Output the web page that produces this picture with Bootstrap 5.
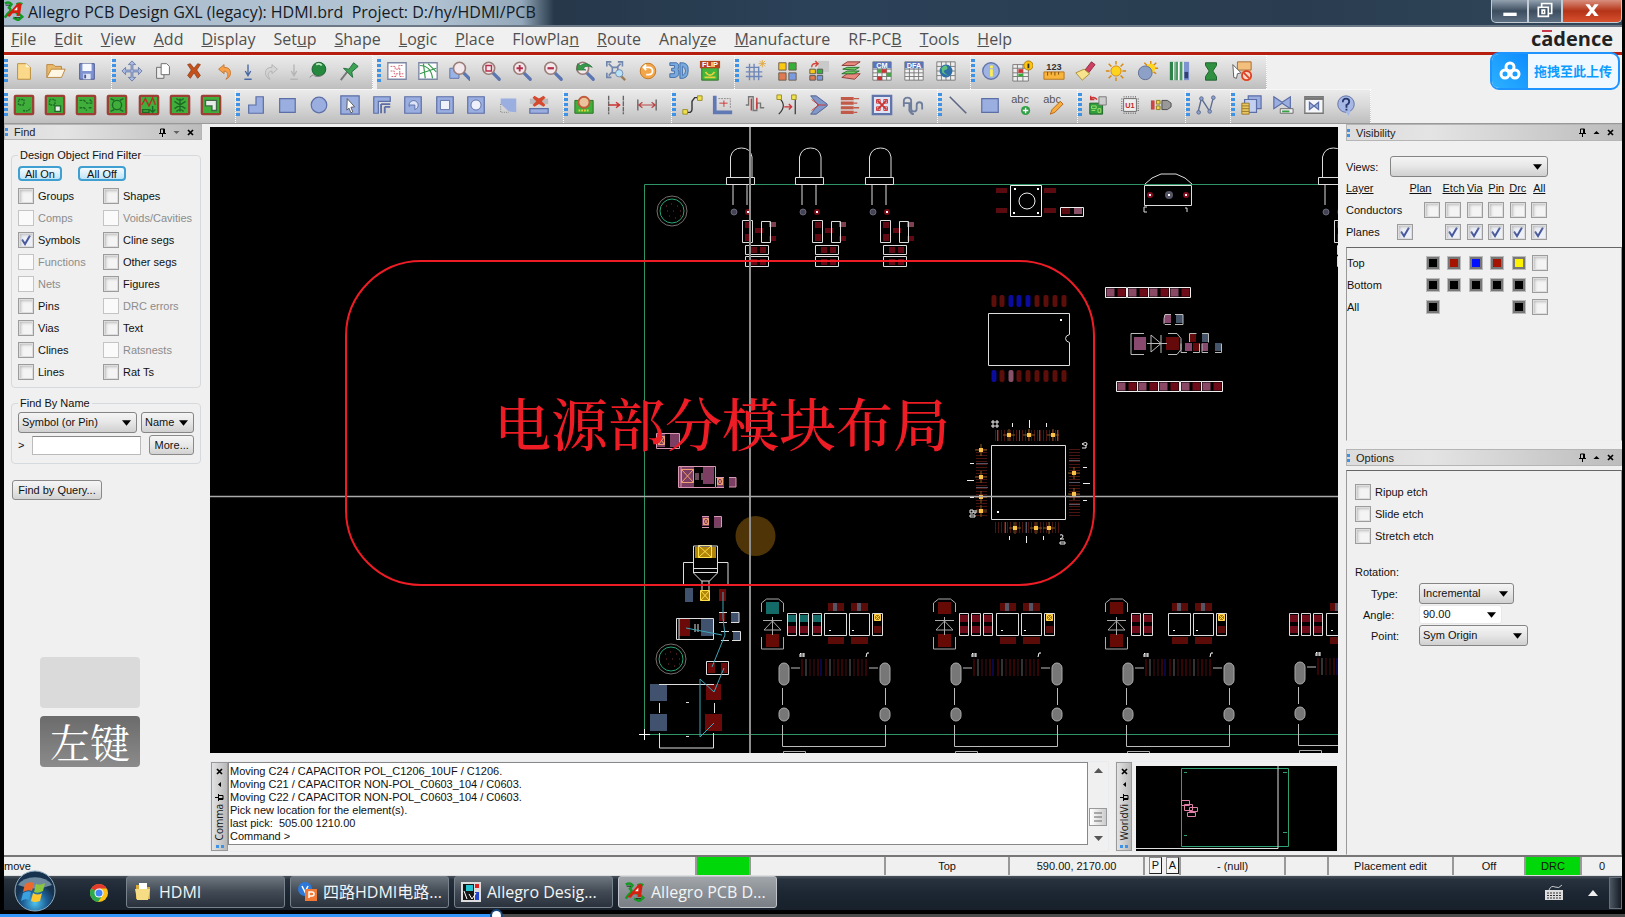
<!DOCTYPE html>
<html lang="en">
<head>
<meta charset="utf-8">
<meta name="viewport" content="width=device-width, initial-scale=1">
<title>Allegro PCB Design GXL</title>
<link href="https://cdn.jsdelivr.net/npm/bootstrap@5.3.0/dist/css/bootstrap.min.css" rel="stylesheet">
<style>
:root{--ui:"Liberation Sans",Arial,sans-serif;--seg:"Open Sans","Noto Sans CJK SC",sans-serif}
body{background:#000;color:#111;font:11px/14px var(--ui);overflow:hidden}
.app-win{padding:0 3px 0 4px;min-height:0}
.app-win>*{background-color:#f0f0f0}
button{font:inherit;color:inherit}
/* title bar */
.title-strip{height:27px;background:linear-gradient(90deg,#a9bccd 0,#b3c4d3 26%,#93a8ba 32%,#26384a 34%,#2b4157 50%,#2a3d50 80%,#31475a 100%);border-bottom:2px solid #6c7886;font:16px/24px var(--seg);color:#141b26}
.title-strip svg{width:20px;height:22px}
.title-text{white-space:pre;padding-left:4px}
.wbtn{height:23px;border:1px solid #c3ccd5;border-top:0;background:linear-gradient(#93a1af,#3c4d5f 50%,#5d6f82);color:#fff;padding:0;display:flex;align-items:center;justify-content:center}
.wbtn-min{width:37px;border-radius:0 0 0 5px}.wbtn-max{width:34px}.wbtn-close{width:60px;background:linear-gradient(#d98f7e,#b53317 50%,#d8512f);border-radius:0 0 5px 0}
/* menu */
.menu-strip{height:28px;border-bottom:3px solid #b61f10;font:16px/24px var(--seg);padding:0 7px 0 7px}
.menu-strip .nav{gap:18px}
.menu-strip .nav-link{padding:0;color:#505050}
.brand-word{font:bold 20px/24px "Open Sans",sans-serif;color:#222;padding-right:2px}
.brand-word span{position:relative}
.brand-word span::before{content:"";position:absolute;left:1px;right:1px;top:5px;height:2px;background:#c8374a}
/* toolbars */
.tool-row{height:34px}
.tool-group{height:34px;background:linear-gradient(#ececec,#d8d8d8 50%,#bebebe);border-right:1px dotted #fff;box-shadow:inset 0 1px #f6f6f6;padding:0 8px 3px 0}
.grip{width:4px;height:24px;background:repeating-linear-gradient(#3f93e6 0 3px,transparent 3px 5px);flex:none}
.tool-btn{flex:1 1 0;min-width:0;border:0;background:none;padding:0;display:flex;justify-content:center}
.tool-btn svg{width:22px;height:22px;flex:none}
.tool-btn.slim{flex-grow:.5}
.n1{width:45px}.n3{width:108px}.n4{width:140px}.n7{width:232px}.n7w{width:236px}.n8{width:266px}.n9{width:261px}.n9w{width:296px}.n10{width:328px}.n11{width:358px}
.n9{margin-right:4px}
/* docks */
.side-left{width:198px}.side-right{width:276px}
.work-row{gap:8px;border-top:1px solid #999}
.work-row>section{min-width:0;padding-top:3px}
.dock-head{height:16px;background:linear-gradient(90deg,#dcdcdc,#e4e4e4 30%,#bcbcbc);border:1px solid #b5b5b5;line-height:14px;color:#222;padding:0 4px 0 0}
.side-right .dock-head{height:17px;flex:none}
.dots{width:3px;height:8px;background:repeating-linear-gradient(#3f93e6 0 3px,transparent 3px 5px);margin-right:6px}
.dock-ico{border:0;background:none;padding:0;width:14px;height:12px;display:flex;justify-content:center;align-items:center}
.dock-ico svg{width:9px;height:9px}
.group-box{border:1px solid #d5dade;border-radius:4px;margin:8px 1px 0 7px;padding:0 6px 4px;position:relative;min-width:0}
.group-box legend{float:none;width:auto;font-size:11px;line-height:14px;padding:0 2px;margin:0}
.find-grid{display:grid;grid-template-columns:85px 1fr;grid-auto-rows:22px;align-items:center;margin-top:4px}
.name-row{padding-top:2px}
.ck{display:flex;align-items:center;gap:4px;white-space:nowrap}
.ck.off{color:#8c8c8c}
.form-check-input.cb{width:16px;height:16px;margin:0;flex:none;border:1px solid #9c9c9c;border-radius:0;background-color:#f4f4f4;box-shadow:inset 0 0 0 1px #ddd,inset 2px 2px 3px #bbb;opacity:1}
.form-check-input.cb:disabled{opacity:1;border:1px solid #c4c4c4;box-shadow:none;background-color:#fafafa}
.form-check-input.cb:checked{background-color:#eef0f8;border-color:#9c9c9c;background-size:14px 14px;background-image:url("data:image/svg+xml,%3Csvg xmlns='http://www.w3.org/2000/svg' viewBox='0 0 14 14'%3E%3Cpath d='M3 6.5 6 11 11 2.500' fill='none' stroke='%23485a9c' stroke-width='2'/%3E%3C/svg%3E")}
.pill-btn{height:15px;border:2px solid #3f9fd0;border-radius:4px;background:linear-gradient(#f4fbff,#bfe4f8);padding:0;line-height:12px;font-size:11px}
.pill-a{width:44px}.pill-b{width:48px}
.form-select.sel{height:21px;border:1px solid #858585;border-radius:3px;font:11px/17px var(--ui);color:#111;padding:0 18px 0 3px;background:url("data:image/svg+xml,%3Csvg xmlns='http://www.w3.org/2000/svg' viewBox='0 0 10 6'%3E%3Cpath d='M0 0h10L5 6z'/%3E%3C/svg%3E") no-repeat right 5px center/9px 6px,linear-gradient(#f5f5f5,#e6e6e6 50%,#d0d0d0)}
.form-select.plain{height:19px;border-color:#e8e8e8;background:url("data:image/svg+xml,%3Csvg xmlns='http://www.w3.org/2000/svg' viewBox='0 0 10 6'%3E%3Cpath d='M0 0h10L5 6z'/%3E%3C/svg%3E") no-repeat right 5px center/9px 6px,#fff}
.gray-btn{height:20px;border:1px solid #8a8a8a;border-radius:3px;background:linear-gradient(#f5f5f5,#e8e8e8 50%,#d2d2d2);padding:0;line-height:16px}
.find-in{height:19px;border:1px solid #bbb;border-top-color:#888;border-radius:0;padding:0 2px;font:11px/16px var(--ui)}
/* pressed key display */
.key-show{position:absolute;left:40px;bottom:143px;width:100px;z-index:3}
.key-show div{height:51px;border-radius:4px;background:#dadada;margin-top:8px}
.key-show .lit{background:linear-gradient(#6b6b6b,#8b8b8b);color:#fff;font:40px/50px "Noto Serif CJK SC","Noto Sans CJK SC",serif;text-align:center}
/* visibility and options */
.panel-rule{border:1px solid #999;border-top-color:#666;border-bottom-color:#eee}
.vis-grid{width:204px;table-layout:fixed;margin:0;border-collapse:collapse}
.vis-grid .c-label{width:43px}.vis-grid .c-plan{width:32px}
.vis-grid th,.vis-grid td{padding:0;height:22px;font-weight:400;text-align:center;vertical-align:middle;white-space:nowrap}
.vis-grid th:first-child{text-align:left}
.vis-grid th.plan-head{text-align:right;padding-right:11px}
.vis-grid .form-check-input.cb{display:block;margin:0 auto}
.swatch{display:block;width:12px;height:12px;margin:0 auto;padding:0;border:2px solid #777;outline:1px solid #bbb;background:#000}
.sw-red{background:#a51400}.sw-blue{background:#0010ff}.sw-yel{background:#fff200}
.vis-top{height:106px;padding-top:15px}
.vis-layers{height:194px}
.opt-body{padding:13px 8px 0}
.opt-checks{gap:6px;margin-bottom:21px}
.opt-rows{display:grid;grid-template-columns:56px 1fr;row-gap:1px;align-items:center}
.w95{width:95px}.w90{width:90px}.w83{width:83px}.w109{width:109px}.w158{width:158px}.w124{width:124px}.w53{width:53px}.w48{width:48px}
/* canvas and lower docks */
.pcb{display:block;width:100%;flex:1 1 0;min-height:0;background:#000}
.low-docks{height:91px;margin:8px 0 3px;gap:6px}
.v-head{width:17px;background:linear-gradient(90deg,#e2e2e2,#b9b9b9);border:1px solid #999;gap:1px;padding-top:2px}
.v-head b{writing-mode:vertical-rl;transform:rotate(180deg);font:10px/13px "Open Sans",sans-serif;color:#111}
.v-head i{width:8px;height:3px;background:repeating-linear-gradient(90deg,#3f93e6 0 3px,transparent 3px 5px);margin-top:auto;margin-bottom:2px}
.cmd-text{background:#fff;border:1px solid #888;margin-bottom:6px;line-height:13px;padding:2px 1px;resize:none;font-size:11px;font-family:var(--ui);color:#111;border-radius:0;overflow:hidden;white-space:pre}
.scroll-col{width:20px;padding:4px 0 8px}
.thumb{width:18px;height:18px;border:1px solid #999;background:linear-gradient(90deg,#fff,#ccc)}
.world-dock{width:223px}
/* status */
.status-strip{height:21px;border-top:2px solid #777;line-height:18px;border-bottom:1px solid #ddd}
.status-strip>div{border-right:2px solid #999;text-align:center;white-space:nowrap;height:18px;flex:none}
.s54{width:54px}.s135{width:135px}.s124{width:124px}.s105{width:105px}.s43{width:43px}.s125{width:125px}.s72{width:72px}.s56{width:56px}.s42{width:40px}.s36{width:36px}
.green{background:#00d80a}
.pa{border:1px solid #888;border-right-color:#222;border-bottom-color:#222;background:#f6f6f6;width:15px;height:17px;line-height:15px;padding:0}
/* task bar */
.app-win>.task-strip{height:34px;background:linear-gradient(#4a545e 0,#27323e 10%,#1c2733 50%,#17202b);font:16px/30px var(--seg);color:#fff}
.orb{width:46px;height:42px;position:relative;z-index:2;border:0;background:none;padding:0;margin:-6px 0 0 8px}
.orb svg{width:46px;height:42px}
.chrome-btn{padding:0;margin:0 17px 0 31px}
.task-btn{width:159px;height:32px;border:1px solid #78828c;border-radius:3px;background:linear-gradient(#6d757e,#414a54 50%,#2a333d);color:#f4f4f4;padding:0 6px;display:flex;align-items:center;gap:6px;white-space:nowrap;margin-right:5px}
.task-btn svg{width:20px;height:20px;flex:none}
.task-btn.active-win{background:linear-gradient(#a2a6ab,#8b9096 50%,#7a7f85);border-color:#c0c4c8}
.show-desk{width:13px;height:32px;border:1px solid #65707b;background:linear-gradient(90deg,#4c5763,#141b23)}
.tray-up{margin-right:11px}
/* player bar */
.seek-row{height:7px;padding-top:4px}
.seek-row>div{height:3px;background:#4a4a4a;position:relative}
.seek-fill{height:3px;background:#3396fb;width:497px}
.seek-fill::after{content:"";position:absolute;left:492px;top:-3px;width:9px;height:9px;border-radius:5px;background:#fff;box-shadow:0 0 0 2px #17467d}
.upload-tag{position:absolute;right:5px;top:52px;width:130px;height:38px;border:2px solid #1d94ff;border-radius:9px;background:#eff7ff;color:#0a9dff;font:bold 13px/34px "Noto Sans CJK SC",sans-serif;padding:0;z-index:4;overflow:hidden;display:flex;align-items:center}
.upload-tag svg{width:36px;height:36px;flex:none;background:linear-gradient(45deg,#2eb1ff,#0b8cff);margin-right:6px}
</style>
</head>
<body class="d-flex flex-column vh-100">
<div class="app-win d-flex flex-column flex-grow-1 position-relative">
  <header class="title-strip d-flex align-items-start">
    <svg viewBox="0 0 24 24" aria-hidden="true"><use href="#i-allegro"/></svg>
    <div class="title-text flex-grow-1">Allegro PCB Design GXL (legacy): HDMI.brd  Project: D:/hy/HDMI/PCB</div>
    <button class="wbtn wbtn-min" aria-label="Minimize"><svg viewBox="0 0 24 24"><path d="M4 14h16v4H4z" fill="#fff"/></svg></button>
    <button class="wbtn wbtn-max" aria-label="Restore"><svg viewBox="0 0 24 24"><path d="M8 8V3h12v12h-4M4 7.500h12v11H4zM8.500 11h3v4h-3z" fill="none" stroke="#fff" stroke-width="2"/></svg></button>
    <button class="wbtn wbtn-close" aria-label="Close"><svg viewBox="0 0 24 24"><path d="M4 4h5l3 4 3-4h5l-5.500 7 5.500 7h-5l-3-4-3 4H4l5.500-7z" fill="#fff"/></svg></button>
  </header>
  <nav class="menu-strip d-flex justify-content-between" aria-label="Main menu">
    <div class="nav flex-nowrap">
      <a class="nav-link" href="#"><u>F</u>ile</a><a class="nav-link" href="#"><u>E</u>dit</a><a class="nav-link" href="#"><u>V</u>iew</a><a class="nav-link" href="#"><u>A</u>dd</a><a class="nav-link" href="#"><u>D</u>isplay</a><a class="nav-link" href="#">Set<u>u</u>p</a><a class="nav-link" href="#"><u>S</u>hape</a><a class="nav-link" href="#"><u>L</u>ogic</a><a class="nav-link" href="#"><u>P</u>lace</a><a class="nav-link" href="#">FlowPla<u>n</u></a><a class="nav-link" href="#"><u>R</u>oute</a><a class="nav-link" href="#">Analy<u>z</u>e</a><a class="nav-link" href="#"><u>M</u>anufacture</a><a class="nav-link" href="#">RF-PC<u>B</u></a><a class="nav-link" href="#"><u>T</u>ools</a><a class="nav-link" href="#"><u>H</u>elp</a>
    </div>
    <div class="brand-word">c<span>a</span>dence</div>
  </nav>
  <div class="tool-row d-flex" id="row1"></div>
  <div class="tool-row d-flex" id="row2"></div>

  <main class="work-row d-flex flex-grow-1">
    <aside class="side-left">
      <div class="dock-head d-flex align-items-center"><span class="dots"></span><span class="flex-grow-1">Find</span>
        <button class="dock-ico" aria-label="Pin"><svg><use href="#i-pin"/></svg></button><button class="dock-ico" aria-label="Menu"><svg opacity=".5"><use href="#i-down"/></svg></button><button class="dock-ico" aria-label="Close"><svg><use href="#i-x"/></svg></button></div>
      <fieldset class="group-box">
        <legend>Design Object Find Filter</legend>
        <div class="d-flex gap-3 pt-1"><button class="pill-btn pill-a">All On</button><button class="pill-btn pill-b">All Off</button></div>
        <div class="find-grid">
          <label class="ck"><input type="checkbox" class="form-check-input cb">Groups</label><label class="ck"><input type="checkbox" class="form-check-input cb">Shapes</label>
          <label class="ck off"><input type="checkbox" class="form-check-input cb" disabled>Comps</label><label class="ck off"><input type="checkbox" class="form-check-input cb" disabled>Voids/Cavities</label>
          <label class="ck"><input type="checkbox" class="form-check-input cb" checked>Symbols</label><label class="ck"><input type="checkbox" class="form-check-input cb">Cline segs</label>
          <label class="ck off"><input type="checkbox" class="form-check-input cb" disabled>Functions</label><label class="ck"><input type="checkbox" class="form-check-input cb">Other segs</label>
          <label class="ck off"><input type="checkbox" class="form-check-input cb" disabled>Nets</label><label class="ck"><input type="checkbox" class="form-check-input cb">Figures</label>
          <label class="ck"><input type="checkbox" class="form-check-input cb">Pins</label><label class="ck off"><input type="checkbox" class="form-check-input cb" disabled>DRC errors</label>
          <label class="ck"><input type="checkbox" class="form-check-input cb">Vias</label><label class="ck"><input type="checkbox" class="form-check-input cb">Text</label>
          <label class="ck"><input type="checkbox" class="form-check-input cb">Clines</label><label class="ck off"><input type="checkbox" class="form-check-input cb" disabled>Ratsnests</label>
          <label class="ck"><input type="checkbox" class="form-check-input cb">Lines</label><label class="ck"><input type="checkbox" class="form-check-input cb">Rat Ts</label>
        </div>
      </fieldset>
      <fieldset class="group-box pb-2">
        <legend>Find By Name</legend>
        <div class="name-row d-flex gap-1"><select class="form-select sel w124" aria-label="Object type"><option>Symbol (or Pin)</option></select><select class="form-select sel w53" aria-label="Match by"><option>Name</option></select></div>
        <div class="name-row d-flex align-items-center"><label for="fname" class="me-2">&gt;</label><input id="fname" class="form-control find-in w109 me-1"><button class="gray-btn w48 ms-1">More...</button></div>
      </fieldset>
      <button class="gray-btn w90 ms-2 mt-3">Find by Query...</button>
    </aside>

    <section class="d-flex flex-column flex-grow-1">
      <svg class="pcb" viewBox="211 127 1128 626" preserveAspectRatio="xMidYMid slice" fill="none" role="img" aria-label="Board layout">
        <defs>
          <g id="led"><path d="M731.500 177v-20q2-9 11-9t10.500 9v20M727.500 177.500h28v7h-28zM734 185v20M748 185v20" stroke="#ddd"/><circle cx="735" cy="212" r="3" fill="#445" stroke="#667"/><circle cx="749" cy="212" r="3" fill="#7a0b18"/><path d="M748 211h2v2h-2z" fill="#fff"/></g>
          <g id="ledparts"><path d="M746 222h6v6h-6zM746 234h6v7h-6zM756 228h8v5h-8zM770 236h7v5h-7zM752 247h6v6h-6zM761 247h6v6h-6zM752 259h6v6h-6zM761 259h6v6h-6z" fill="#620812"/><path d="M770 222h7v5h-7z" fill="#804050"/><path d="M743.500 220.500h10v22h-10zM762.500 221.500h9v21h-9zM746.500 245.500h23v9h-23zM746.500 256.500h23v10h-23z" stroke="#ddd"/></g>
          <g id="diode"><path d="M767 602h13v12h-13zM767 634h13v13h-13z" fill="#660a06"/><path d="M762.500 612v-9l5-4h12l5 4v9M762.500 637v12h22v-12M773.500 617v18M764 620.500h19M765 630h17l-8.500-9z" stroke="#aaa"/></g>
          <g id="rc"><path d="M789 615h8v7h-8zM789 626h8v7h-8z" fill="#6d0b18"/><path d="M788.500 613.500h9v22h-9z" stroke="#ddd"/></g>
          <g id="ics"><path d="M829 603h16v8h-16zM852 603h17v8h-17zM829 637h16v7h-16zM852 637h17v7h-17zM875 626h7v7h-7z" fill="#5b0c08"/><path d="M834 603h4v8h-4zM858 603h4v8h-4z" fill="#556"/><path d="M825.500 613.500h22v22h-22zM850.500 613.500h20v22h-20zM873.500 613.500h10v22h-10z" stroke="#ddd"/><path d="M830 630h2v1h-2zM853 630h2v1h-2z" fill="#fff"/><path d="M875.500 614.500h6v6h-6zl6 6m0-6-6 6" stroke="#ffd24a" fill="#a57a10"/></g>
          <g id="conn"><g stroke="#aaa" fill="#777"><rect x="780" y="663" width="10" height="22" rx="5"/><rect x="881" y="663" width="10" height="22" rx="5"/><rect x="780" y="708" width="10" height="13" rx="5"/><rect x="881" y="708" width="10" height="13" rx="5"/></g><path d="M783.500 688v17M886.500 688v17M783.500 725v21.500h103V725M792 668h9M870 668h9" stroke="#bbb"/><path d="M803 659v17M819 659v17M827 659v17M839 659v17M843 659v17M859 659v17M867 659v17" stroke="#6b0b0b"/><path d="M807 659v17M831 659v17M851 659v17" stroke="#666"/><path d="M811 659v17M815 659v17M835 659v17M847 659v17M855 659v17M863 659v17" stroke="#441014"/><path d="M822 659v17" stroke="#118"/><path d="M801 657v-3l1-1v4M804 653v4M805 653v4M867 657l1-4h2" stroke="#fff"/><path d="M784.500 751.500h22v4h-22z" stroke="#aaa"/></g>
          <g id="hole"><circle r="15" stroke="#776f6f"/><circle r="12" stroke="#2aa374"/><path d="M-6-5h1m4-2h1m5 2h1m-11 5h1m5 0h1m6 0h1m-12 5h1m5 2h1m4-2h1" stroke="#803030"/></g>
          <g id="pinr"><rect x="-2.500" width="5" height="12" rx="2" fill="#5c0e0a"/></g>
          <g id="pinb"><rect x="-2.500" width="5" height="12" rx="2" fill="#0b0b9c"/></g>
          <g id="mk"><path d="M-6 0H6M0-6V6" stroke="#8a5a20"/><path d="M-2-2h4v4h-4z" fill="#fbc24a"/></g>
          <g id="twopad"><path d="M1 1h8v8H1z" fill="#8a4a66"/><path d="M12 1h8v8h-8z" fill="#6d0b18"/><path d="M0 0h21v10H0z" stroke="#eee"/></g>
        </defs>
        <path d="M1340 184.500H645.500V734.500H1340" stroke="#2f9466"/>
        <use href="#hole" x="673" y="211"/><use href="#hole" x="672" y="659"/>
        <use href="#led"/><use href="#led" x="69"/><use href="#led" x="139"/><use href="#led" x="592"/>
        <use href="#ledparts"/><use href="#ledparts" x="70"/><use href="#ledparts" x="138"/><use href="#ledparts" x="592"/>
        <path d="M997 188h11v5h-11zM997 208h11v5h-11zM1045 188h12v5h-12zM1045 208h12v5h-12zM1063 208h8v6h-8z" fill="#5b0b10"/><path d="M1075 208h8v6h-8z" fill="#8a5068"/>
        <path d="M1011.500 185.500h31v31h-31zM1061.500 207.500h23v9h-23z" stroke="#eee"/><circle cx="1028" cy="201" r="8" stroke="#eee"/><path d="M1015 188h2v2h-2zM1038 188h2v2h-2zM1014 212h2v2h-2zM1038 212h2v2h-2z" fill="#fff"/>
        <path d="M1145.500 185.500h47v20h-47zM1146 184l7-6 9-4h15l9 4 7 6M1148 207h-3v5h3M1186 208h2v4" stroke="#ddd"/><circle cx="1151" cy="195" r="3" fill="#8b0b20"/><circle cx="1170" cy="195" r="4" fill="#556"/><circle cx="1187" cy="195" r="3" fill="#8b0b20"/><path d="M1150 194h2v2h-2zM1169 194h2v2h-2zM1186 194h2v2h-2z" fill="#fff"/>
        <path d="M989.500 313.500h81v21q-4 1-4 4t4 4v23h-81z" stroke="#ddd"/><path d="M1061 319h2v2h-2z" fill="#fff"/>
        <use href="#pinr" x="995" y="295"/><use href="#pinr" x="1003" y="295"/><use href="#pinb" x="1012" y="295"/><use href="#pinb" x="1020" y="295"/><use href="#pinb" x="1029" y="295"/><use href="#pinr" x="1038" y="295"/><use href="#pinr" x="1047" y="295"/><use href="#pinr" x="1056" y="295"/><use href="#pinr" x="1065" y="295"/>
        <use href="#pinb" x="995" y="370"/><use href="#pinr" x="1003" y="370"/><rect x="1009.500" y="370" width="5" height="12" rx="2" fill="#8a5068"/><use href="#pinr" x="1020" y="370"/><use href="#pinr" x="1029" y="370"/><use href="#pinr" x="1038" y="370"/><use href="#pinr" x="1047" y="370"/><use href="#pinr" x="1056" y="370"/><use href="#pinr" x="1065" y="370"/>
        <use href="#twopad" x="1106.500" y="287.500"/><use href="#twopad" x="1128.500" y="287.500"/><use href="#twopad" x="1149.500" y="287.500"/><use href="#twopad" x="1170.500" y="287.500"/>
        <use href="#twopad" x="1117.500" y="381.500"/><use href="#twopad" x="1138.500" y="381.500"/><use href="#twopad" x="1159.500" y="381.500"/><use href="#twopad" x="1181.500" y="381.500"/><use href="#twopad" x="1202.500" y="381.500"/>
        <path d="M1165 315h7v8h-7zM1186 343h7v8h-7zM1203 343h6v8h-6zM1135 337h12v13h-12z" fill="#8a4a70"/><path d="M1177 315h7v8h-7zM1203 334h7v8h-7zM1216 343h6v8h-6z" fill="#455468"/><path d="M1167 337h13v13h-13zM1191 334h6v8h-6zM1194 343h6v8h-6z" fill="#650a0a"/>
        <path d="M1172 314.500h-6l-1 4v5l1 1h6M1176 314.500h8v10h-8M1190.500 342v-8.500h7M1203 333.500h6.500v9M1188 352.500h-6v-9M1194 352.500h6.500v-9M1209 352.500h-6v-9M1216 352.500h6.500v-9M1145 333.500h-13v21h13M1169 333.500h9l4 5v11l-4 5h-9M1148 343.500h20M1152 335v17l10-8.500zM1162 335v18" stroke="#bbb"/>
        <path d="M992.500 445.500h74v74h-74z" stroke="#ddd"/><path d="M998 511h2v2h-2z" fill="#fff"/>
        <g stroke-dasharray="1 2" stroke="#4a1511" stroke-width="11"><path d="M996 435.500h66M996 527.500h66M982.500 449v67M1075.500 449v67"/></g>
        <path d="M998.500 430v11M1020.500 430v11M1040.500 430v11M1058.500 430v11M1006.500 522v11M1027.500 522v11M977 463.500h12M977 487.500h12M1070 460.500h11M1070 482.500h11M1070 504.500h11" stroke="#556"/>
        <use href="#mk" x="1010" y="435"/><use href="#mk" x="1030" y="435"/><use href="#mk" x="1054" y="435"/><use href="#mk" x="1016" y="528"/><use href="#mk" x="1037" y="528"/><use href="#mk" x="1050" y="528"/><use href="#mk" x="982" y="450"/><use href="#mk" x="982" y="477"/><use href="#mk" x="982" y="497"/><use href="#mk" x="982" y="511"/><use href="#mk" x="1075" y="473"/><use href="#mk" x="1075" y="494"/>
        <path d="M1013.500 423v4M1030.500 420v8M1047.500 423v4M1010.500 536v4M1027.500 536v7M1044.500 536v4M971 463.500h4M968 480.500h7M971 497.500h4M1084 467.500h4M1084 483.500h7M1084 500.500h4M993 421h2v2h-2zM997 421h2v2h-2zM993 425h2v2h-2zM997 425h2v2h-2zM1083 448h4v-3M1083 444q5-3 5 0t-5 0M971 510h3v3h-3zM975 510v3h2v-3M971 515h5v2h-5zM1061 535q3-1 3 1t-3 3h4M1061 542h5v2h-5z" stroke="#eee"/>
        <use href="#diode"/><path d="M767 602h13v12h-13z" fill="#146a66"/><use href="#rc"/><use href="#rc" x="12"/><use href="#rc" x="25"/><path d="M789 615h8v7h-8zM801 615h8v7h-8zM814 615h8v7h-8z" fill="#146a66"/><use href="#ics"/><use href="#conn"/>
        <use href="#diode" x="172"/><use href="#rc" x="172"/><use href="#rc" x="184"/><use href="#rc" x="196"/><use href="#ics" x="172"/><use href="#conn" x="172"/>
        <use href="#diode" x="344"/><use href="#rc" x="344"/><use href="#rc" x="356"/><use href="#ics" x="344"/><use href="#conn" x="344"/>
        <use href="#rc" x="502"/><use href="#rc" x="514"/><use href="#rc" x="526"/><use href="#ics" x="502"/><use href="#conn" x="516" y="-1"/>
        <!-- power parts beside the board edge -->
        <path d="M658 434h8v13h-8zM671 434h9v13h-9zM680 467h15v20h-15zM704 467h11v17h-11zM718 478h7v9h-7zM730 478h7v9h-7zM703 517h7v9h-7zM715 517h7v9h-7z" fill="#7c3e62"/>
        <path d="M657.500 433.500h23v15h-23zM679.500 466.500h37v21h-37zM682 467v20M717 477.500h8m-8 10h8M730 477.500h7v9.500h-7M703 516.500h7m-7 11h7M715 516.500h7.500v10.500H715M697 473v7m2-7v7m4-7v7" stroke="#d898b4"/>
        <path d="M682.500 469.500h12v13h-12zl12 13m0-13-12 13M659.500 436.500h6v8h-6zl6 8m0-8-6 8M718.500 478.500h5v6h-5zl5 6m0-6-5 6M704.500 518.500h5v6h-5zl5 6m0-6-5 6" stroke="#f0a070"/>
        <path d="M696 547h21v11h-21zM702 591h9v9h-9z" fill="#b08408"/><path d="M699.500 545.500h13v12h-13zl13 12m0-12-13 12M701.500 590.500h9v10h-9zl9 10m0-10-9 10" stroke="#ffdf4a"/>
        <path d="M694.500 573v-27h24v27l-8 8h-8zM695 568.500h24M695 572.500h24M684.500 586v-23.500h10M719 562.500h10V586M703 581v9M710 581v9" stroke="#ddd"/>
        <path d="M686 588h8v14h-8zM702 619h13v17h-13zM732 613h8v9h-8zM734 632h8v8h-8zM651 684h17v17h-17zM651 714h17v17h-17z" fill="#40526e"/>
        <path d="M720 589h7v12h-7zM680 619h11v17h-11zM720 613h6v8h-6zM709 663h7v10h-7zM722 663h6v10h-6zM707 684h15v16h-15zM706 714h17v17h-17z" fill="#6c0a0a"/>
        <path d="M677.500 618.500h37v21h-37zM680 619v20M720 612.500h8m-8 10h8M732 612.500h8v10h-8M722 631.500h8m-8 9h8M733 631.500h8.500v9H733M707.500 661.500h22v13h-22zM660 684.500h55M660.500 703v10M715.500 703v10M660.500 733v15h54v-15M696 624v8m3-8v8M687 702.500h3M687 736.500h3" stroke="#ddd"/>
        <path d="M724 592v26l2 17-13 32M687 628l36 7M725 668l-10 24-14-13v58l14-14" stroke="#3fa6b8"/>
        <circle cx="756.500" cy="536" r="20" fill="#4e3406"/>
        <path d="M751 127v626" stroke="#8f8f8f" stroke-width="2"/><path d="M211 496.500h1129" stroke="#aaa" stroke-width="1.500"/><path d="M640 734.500h11M645.500 729v11" stroke="#fff"/>
        <rect x="347" y="261" width="748" height="324" rx="75" stroke="#ee1c25" stroke-width="2"/>
        <text x="495" y="446" font-family="Noto Serif CJK SC, Noto Sans CJK SC, serif" font-size="57" font-weight="500" fill="#ee1c25">电源部分模块布局</text>
      </svg>

      <div class="low-docks d-flex">
        <div class="d-flex flex-grow-1 border border-secondary-subtle">
          <div class="v-head d-flex flex-column align-items-center"><button class="dock-ico" aria-label="Close"><svg><use href="#i-x"/></svg></button><button class="dock-ico" aria-label="Collapse"><svg><use href="#i-left"/></svg></button><button class="dock-ico" aria-label="Pin"><svg><use href="#i-pinh"/></svg></button><b>Comma</b><i></i></div>
          <textarea class="cmd-text flex-grow-1" aria-label="Command" readonly>Moving C24 / CAPACITOR POL_C1206_10UF / C1206.
Moving C21 / CAPACITOR NON-POL_C0603_104 / C0603.
Moving C22 / CAPACITOR NON-POL_C0603_104 / C0603.
Pick new location for the element(s).
last pick:  505.00 1210.00
Command &gt;</textarea>
          <div class="scroll-col d-flex flex-column align-items-center">
            <svg width="9" height="9"><path d="M4.500 2 9 7H0z" fill="#555"/></svg><div class="thumb mt-auto mb-2"><svg class="d-block" viewBox="0 0 16 16"><path d="M4 4h8M4 8h8M4 12h8" stroke="#666"/></svg></div><svg width="9" height="9"><path d="M4.500 7 9 2H0z" fill="#555"/></svg>
          </div>
        </div>
        <div class="world-dock d-flex border border-secondary-subtle">
          <div class="v-head d-flex flex-column align-items-center"><button class="dock-ico" aria-label="Close"><svg><use href="#i-x"/></svg></button><button class="dock-ico" aria-label="Collapse"><svg><use href="#i-left"/></svg></button><button class="dock-ico" aria-label="Pin"><svg><use href="#i-pinh"/></svg></button><b>WorldVi</b><i></i></div>
          <svg class="flex-grow-1 m-1 mb-0 me-0 bg-black" viewBox="1138 764 201 85" preserveAspectRatio="xMidYMid slice" fill="none"><path d="M1183.500 766.500h107v78h-107zM1186 770.500h3M1285 770.500h4M1186 833.500h3M1285 830.500h4" stroke="#2fa070"/><path d="M1136 846.500h144V763" stroke="#ddd"/><path d="M1183.500 798.500h8v5h-8zM1186.500 802.500h8v6h-8zM1191.500 805.500h8v4h-8zM1189.500 810.500h8v4h-8z" stroke="#e080a8"/></svg>
        </div>
      </div>
    </section>

    <aside class="side-right d-flex flex-column">
      <div class="dock-head d-flex align-items-center"><span class="dots"></span><span class="flex-grow-1">Visibility</span>
        <button class="dock-ico" aria-label="Pin"><svg><use href="#i-pin"/></svg></button><button class="dock-ico" aria-label="Collapse"><svg><use href="#i-up"/></svg></button><button class="dock-ico" aria-label="Close"><svg><use href="#i-x"/></svg></button></div>
      <div class="vis-top">
        <div class="d-flex align-items-center gap-2"><label for="views" class="pe-1">Views:</label><select id="views" class="form-select sel w158"><option></option></select></div>
        <table class="vis-grid" id="visTop">
          <colgroup><col class="c-label"><col class="c-plan"><col><col><col><col><col><col></colgroup>
          <tr><th><u>Layer</u></th><th colspan="2" class="plan-head"><u>Plan</u></th><th><u>Etch</u></th><th><u>Via</u></th><th><u>Pin</u></th><th><u>Drc</u></th><th><u>All</u></th></tr>
        </table>
      </div>
      <div class="vis-layers panel-rule pt-1">
        <table class="vis-grid" id="visLayers"><colgroup><col class="c-label"><col class="c-plan"><col><col><col><col><col><col></colgroup></table>
      </div>
      <div class="dock-head d-flex align-items-center mt-2"><span class="dots"></span><span class="flex-grow-1">Options</span>
        <button class="dock-ico" aria-label="Pin"><svg><use href="#i-pin"/></svg></button><button class="dock-ico" aria-label="Collapse"><svg><use href="#i-up"/></svg></button><button class="dock-ico" aria-label="Close"><svg><use href="#i-x"/></svg></button></div>
      <div class="opt-body panel-rule flex-grow-1 mt-1">
        <div class="opt-checks d-flex flex-column">
          <label class="ck"><input type="checkbox" class="form-check-input cb">Ripup etch</label>
          <label class="ck"><input type="checkbox" class="form-check-input cb">Slide etch</label>
          <label class="ck"><input type="checkbox" class="form-check-input cb">Stretch etch</label>
        </div>
        <div class="mb-1">Rotation:</div>
        <div class="opt-rows ps-2">
          <label for="rt" class="ps-2">Type:</label><select id="rt" class="form-select sel w95"><option>Incremental</option></select>
          <label for="ra">Angle:</label><select id="ra" class="form-select sel plain w83"><option>90.00</option></select>
          <label for="rp" class="ps-2">Point:</label><select id="rp" class="form-select sel w109"><option>Sym Origin</option></select>
        </div>
      </div>
    </aside>
  </main>

  <div class="status-strip d-flex">
    <div class="flex-grow-1 text-start">move</div><div class="s54 green"></div><div class="s135"></div><div class="s124">Top</div><div class="s135">590.00, 2170.00</div>
    <div class="s36 d-flex gap-1 ps-1"><button class="pa">P</button><button class="pa">A</button></div>
    <div class="s105">- (null)</div><div class="s43"></div><div class="s125">Placement edit</div><div class="s72">Off</div><div class="s56 green">DRC</div><div class="s42 border-0">0</div>
  </div>
  <footer class="task-strip d-flex">
    <button class="orb" aria-label="Start"><svg viewBox="0 0 46 42"><defs><radialGradient id="og" cy=".8"><stop offset="0" stop-color="#4fc3f0"/><stop offset=".6" stop-color="#1d5f96"/><stop offset="1" stop-color="#16324e"/></radialGradient></defs><circle cx="23" cy="21" r="20" fill="url(#og)" stroke="#8faabd"/><path d="M6 15a19 14 0 0 1 34 0q-17 7-34 0z" fill="#b9d2e2" opacity=".55"/><path d="M13 14q5-3 9-1l-2 8q-4-2-9 1z" fill="#ee6a2c"/><path d="M24 14q4 2 9-1l-2 8q-5 3-9 1z" fill="#8cc63f"/><path d="M11 23q5-3 8-1l-2 8q-4-2-8 1z" fill="#3aa0e0"/><path d="M21 23q5 3 9 0l-2 8q-5 2-9 0z" fill="#fdc82f"/></svg></button>
    <button class="chrome-btn border-0 bg-transparent" aria-label="Chrome"><svg class="d-block" width="20" height="20" viewBox="0 0 20 20"><circle cx="10" cy="10" r="9" fill="#fbc116"/><path d="M10 10 2.200 5.500A9 9 0 0 1 17.800 5.500H10z" fill="#e33b2e"/><path d="M10 10 2.200 5.500A9 9 0 0 0 9 19l4-6z" fill="#2da94f"/><circle cx="10" cy="10" r="4.500" fill="#fff"/><circle cx="10" cy="10" r="3.500" fill="#4285f4"/></svg></button>
    <button class="task-btn"><svg viewBox="0 0 20 20"><path d="M3 3h6l1 2h7v12H3z" fill="#d9a93c"/><path d="M6 1h8v10H6z" fill="#fff"/><path d="M2 7h15l-2 11H4z" fill="#f5dc85"/></svg>HDMI</button>
    <button class="task-btn"><svg viewBox="0 0 20 20"><circle cx="8" cy="7" r="7" fill="#2d78d8"/><path d="m5 4 3 6 3-6" fill="none" stroke="#fff" stroke-width="1.500"/><path d="M8 7h12v12H8z" fill="#f07a35"/><path d="M12 16v-6h3a2 2 0 0 1 0 4h-3" fill="none" stroke="#fff" stroke-width="1.500"/></svg>四路HDMI电路...</button>
    <button class="task-btn"><svg viewBox="0 0 20 20"><path d="M0 0h20v20H0z" fill="#ddd"/><path d="M2 2h11v16H2z" fill="#151515"/><path d="M5 3h7v6H5z" fill="#27c2d0"/><path d="M14 2h4v4h-4z" fill="#d22"/><path d="M14 10h4v8h-4z" fill="#24c"/><path d="m3 9 3 8M8 12l3 5 4-6" stroke="#fff" fill="none"/></svg>Allegro Desig...</button>
    <button class="task-btn active-win"><svg viewBox="0 0 24 24"><use href="#i-allegro"/></svg>Allegro PCB D...</button>
    <div class="ms-auto d-flex align-items-center">
      <button class="border-0 bg-transparent p-0 me-4" aria-label="Keyboard"><svg class="d-block" width="20" height="18" viewBox="0 0 20 18"><path d="M1 6h18v10H1z" fill="#ddd"/><path d="M3 9h14M3 11.500h14M3 14h14" stroke="#333" stroke-dasharray="2 1"/><path d="M5 6q2-5 6-3t7-2" fill="none" stroke="#ccc"/></svg></button>
      <button class="tray-up border-0 bg-transparent p-0" aria-label="Hidden icons"><svg class="d-block" width="10" height="8"><path d="M5 1 10 7H0z" fill="#eee"/></svg></button>
      <div class="show-desk"></div>
    </div>
  </footer>

  <div class="key-show bg-transparent"><div></div><div class="lit">左键</div></div>
  <button class="upload-tag"><svg viewBox="0 0 36 36"><g fill="none" stroke="#fff" stroke-width="3"><circle cx="18" cy="14" r="4"/><circle cx="13" cy="21" r="4"/><circle cx="23" cy="21" r="4"/></g></svg>拖拽至此上传</button>
</div>
<div class="seek-row"><div><div class="seek-fill"></div></div></div>

<svg width="0" height="0" class="position-absolute" aria-hidden="true">
  <symbol id="i-allegro" viewBox="0 0 24 24"><path d="M1 3q5-3 8 1l-3 4q3 2 1 5-4 3-6 7M14 14q5 1 8 5l-5 4-6-3M15 4q4-2 7 0" fill="none" stroke="#139a22" stroke-width="3"/><path d="M3 18 16 3q4-2 5 2l-2 13h-4l1-4-6 1-3 4z" fill="#d5200f"/><path d="m12 11 4-4v4z" fill="#fff"/><path d="M2 5h5M13 20h6" stroke="#111"/></symbol>
  <symbol id="i-pin" viewBox="0 0 9 9"><path d="M2.500 5V1h4v4M1 5.500h7M4.500 5.500V9M5.500 1v4" fill="none" stroke="#000"/></symbol>
  <symbol id="i-pinh" viewBox="0 0 9 9"><path d="M4 2.500h4v4H4M3.500 1v7M0 4.500h3M4 5.500h4" fill="none" stroke="#000"/></symbol>
  <symbol id="i-x" viewBox="0 0 9 9"><path d="m2 2 5 5M7 2 2 7" stroke="#000" stroke-width="1.700"/></symbol>
  <symbol id="i-up" viewBox="0 0 9 9"><path d="M4.500 3 7.500 6h-6z"/></symbol>
  <symbol id="i-down" viewBox="0 0 9 9"><path d="M4.500 6 7.500 3h-6z"/></symbol>
  <symbol id="i-left" viewBox="0 0 9 9"><path d="M3 4.500 6 2v5z"/></symbol>
</svg>

<script src="https://cdn.jsdelivr.net/npm/bootstrap@5.3.0/dist/js/bootstrap.bundle.min.js"></script>
<script>
// Toolbar artwork, drawn on a 24-unit grid
const B='#9aaee0', BS='#5c6ea6';
const lens=(inner='')=>`<path d="m14 14 7 7" stroke="#5b76b0" stroke-width="3.500" stroke-linecap="round"/><circle cx="9.500" cy="9" r="6.500" fill="#f3e9ec" stroke="#9a7c78" stroke-width="1.800"/>${inner}`;
const green=inner=>`<rect x="2" y="2" width="20" height="20" rx="1" fill="#3fae3a" stroke="#9c3f35" stroke-width="2.500"/><g fill="none" stroke="#1d6a24" stroke-width="1.500">${inner}</g>`;
const blue=inner=>`<g fill="${B}" stroke="${BS}" stroke-width="1.300">${inner}</g>`;
const table=(t,x='')=>`<path d="M2 2h20v20H2z" fill="#f4f4f4" stroke="#777"/><path d="M2 10h20M2 14h20M2 18h20M7 8v14M12 8v14M17 8v14" stroke="#777"/>${x}<path d="M2 2h20v7H2z" fill="#5b74b8"/><text x="12" y="8.500" font-size="8" font-weight="bold" text-anchor="middle" font-family="Liberation Sans" fill="#fff">${t}</text>`;
const art={
New:'<path d="M5 4h9l5 4v13H5z" fill="#fbd98a" stroke="#b98a35"/><path d="M14 4v4h5z" fill="#fff3d0"/>',
Open:'<path d="M2 19V5h7l2 2h7v4" fill="#e9b96a" stroke="#b9833c"/><path d="m2 19 5-9h15l-4 9z" fill="#fff6e4" stroke="#b9833c"/>',
Save:'<path d="M4 4h16v17H4z" fill="#7e93cf" stroke="#47558c"/><path d="M7 4h10v8H7z" fill="#f6f8ff"/><path d="M8 15h8v6H8z" fill="#dfe5f5"/><path d="M9 16h2v4H9z" fill="#47558c"/>',
Move:'<path d="m12 1 4 4h-3v6h6V8l4 4-4 4v-3h-6v6h3l-4 4-4-4h3v-6H5v3l-4-4 4-4v3h6V5H8z" fill="#a9bbe2" stroke="#566b9c" stroke-width=".8"/>',
Copy:'<path d="M5 8h8v12H5z" fill="#eee" stroke="#666"/><path d="M10 4h6l3 3v9h-9z" fill="#fff" stroke="#666"/>',
Delete:'<path d="m5 5 3-1 4 5 4-5 3 1-4 6 4 6-3 3-4-6-4 6-3-3 4-6z" fill="#c5501a" stroke="#7e3210" stroke-width=".7"/>',
Undo:'<path d="m5 10 6-5v3q7 0 7 6 0 5-5 7 3-3 2-6-1-3-4-3v3z" fill="#f6a04a" stroke="#bd6a1f" stroke-width=".8"/>',
Down:'<path d="M12 5v11m-3-4 3 5 3-5M8 21h8" fill="none" stroke="#4869a4" stroke-width="1.500"/>',
Redo:'<path d="m19 10-6-5v3q-7 0-7 6 0 5 5 7-3-3-2-6 1-3 4-3v3z" fill="#d4d4d4" stroke="#aaa" stroke-width=".8"/>',
Step:'<path d="M12 5v11m-3-4 3 5 3-5M8 21h8" fill="none" stroke="#b5b5b5" stroke-width="1.500"/>',
Fix:'<circle cx="13" cy="10" r="7.500" fill="#24893c" stroke="#155c28"/><path d="M3 19q4-4 5-2t8 0" stroke="#777" fill="none"/><path d="M10 5q4-2 6 1" stroke="#c5eac9" stroke-width="2" fill="none"/>',
Pin:'<path d="m3 22 7-9" stroke="#777" stroke-width="2"/><path d="m6 9 6 1 5-7 5 4-7 6 1 6z" fill="#3ea254" stroke="#1d6c35"/>',
Grid1:'<path d="M2 3h20v18H2z" fill="#fff" stroke="#7d88a5" stroke-width="1.500"/><path d="M5 7h5v3h4V6h5M5 12h4v3h10M6 18h5v-2M15 9v9h4" fill="none" stroke="#d35a68" stroke-dasharray="2 1"/>',
Grid2:'<path d="M2 3h20v18H2z" fill="#fff" stroke="#7d88a5" stroke-width="1.500"/><path d="M3 6q12 0 14 14M7 4l2 16M3 15l18-6M12 4l9 9" fill="none" stroke="#3b9a50" stroke-width="1.300"/>',
ZoomPts:'<path d="M2 9h10v11H2z" fill="#9ab3e6" stroke="#5c6ea6"/><g transform="translate(3 0)">'+lens()+'</g>',
ZoomBox:lens('<path d="M6.500 6h6v6h-6z" fill="none" stroke="#b82d4a" stroke-width="1.500"/>'),
ZoomIn:lens('<path d="M9.500 5.500v7M6 9h7" stroke="#b82d4a" stroke-width="2"/>'),
ZoomOut:lens('<path d="M6 9h7" stroke="#b82d4a" stroke-width="2.400"/>'),
ZoomPrev:lens('')+'<path d="m3 11 1-7 3 2q7-5 13 2-6-3-10 1l3 2z" fill="#379a4b" stroke="#1d6c35" stroke-width=".7"/>',
ZoomFit:'<path d="M2 7V2h5M14 2h5v5M2 14v5h5M8 8h6v6H8zM4 4l4 4M17 4l-4 4M4 17l4-4" fill="none" stroke="#7186ad" stroke-width="1.800"/><path d="m17 17 5 5" stroke="#9a7c58" stroke-width="2.500"/><circle cx="15.500" cy="14.500" r="4" fill="#b9e2f5" stroke="#6f8bb0"/>',
Refresh:'<circle cx="12" cy="12" r="8.500" fill="#f3a649" stroke="#c3751e"/><path d="M8 8h5a4 4 0 0 1 0 8h-3M10 5 7 8l3 3" fill="none" stroke="#fff" stroke-width="2"/>',
View3D:'<path d="M2 3h7q4 1 2 7 3 7-3 9H2v-4h5v-3H4V9h3V6H2zM13 3q10-1 9 9 0 9-9 8zm3 4v10q3-1 3-5t-3-5z" fill="#7aa9de" stroke="#3b6aa5"/>',
Flip:'<path d="M3 8h18v14H3z" fill="#43b43c" stroke="#2a6d22"/><path d="M7 13q5 7 10 0M6 19h12" stroke="#e7d13d" fill="none" stroke-width="2"/><path d="M1 1h22v8H1z" fill="#b4461d"/><text x="12" y="8" font-size="8" font-weight="bold" text-anchor="middle" font-family="Liberation Sans" fill="#fff">FLIP</text>',
Grids:'<path d="M6 4v18M11 4v18M16 7v15M2 8h14M2 13h18M2 18h18" stroke="#6f86b8" stroke-width="1.500"/><path d="M20 0v8M16 4h8M17 1l6 6M23 1l-6 6" stroke="#e0aa3f"/>',
Color:'<path d="M3 3h8v8H3z" fill="#fbc912"/><path d="M14 3h8v8h-8z" fill="#35b03a"/><path d="M3 14h8v8H3z" fill="#e07a52"/><path d="M14 14h8v8h-8z" fill="#7b9be0"/><path d="M3 3h8v8H3zM14 3h8v8h-8zM3 14h8v8H3zM14 14h8v8h-8z" fill="none" stroke="#6c5c4a"/>',
Shadow:'<path d="M11 1h12v12H11z" fill="#c9c9c9"/><path d="M2 10h6v5H2z" fill="#fbc912"/><path d="M10 10h6v5h-6z" fill="#35b03a"/><path d="M2 17h6v5H2z" fill="#e07a52"/><path d="M10 17h6v5h-6z" fill="#7b9be0"/><path d="M2 10h6v5H2zM10 10h6v5h-6zM2 17h6v5H2zM10 17h6v5h-6z" fill="none" stroke="#555"/><path d="M4 8q0-5 6-4M8 1l3 3-3 3" stroke="#d2453a" fill="none" stroke-width="1.500"/>',
Layers:'<path d="m2 6 6-4h14l-6 4zM2 19l6-4h14l-6 6z" fill="#e98a80" stroke="#8a3a34"/><path d="m3 10 5-2h13l-5 3zM2 15l6-3h13l-6 3z" fill="#6fc862" stroke="#27702a"/>',
CM:table('CM','<path d="M7 10h5v4H7zM17 14h5v4h-5z" fill="#4aa34a"/><path d="M12 10h5v4h-5zM7 18h5v4H7z" fill="#c33"/>'),
DFA:table('DFA'),
Web:'<path d="M2 2h20v20H2z" fill="#eee" stroke="#777"/><path d="M2 7h20M2 12h20M2 17h20M7 2v20M12 2v20M17 2v20" stroke="#777"/><circle cx="12" cy="12" r="7" fill="#2f6fa8"/><path d="M7 9q4-5 6-2t-2 4 2 5-5-2z" fill="#5fc07a"/>',
Info:'<circle cx="12" cy="12" r="9" fill="#9fb4e4" stroke="#6476a8" stroke-width="1.500"/><path d="M11 6h3v3h-3zM11 10h3v8h-3z" fill="#fff04f"/>',
Report:'<path d="M2 5h17v18H2z" fill="#eee" stroke="#777"/><path d="M2 9h17M2 14h17M2 18h17M7 5v18M13 5v18" stroke="#777"/><path d="M8 10h5v4H8z" fill="#c33"/><path d="M8 15h5v3H8z" fill="#3a3"/><circle cx="19" cy="6" r="5" fill="#fdc30f" stroke="#a87b08"/><path d="M18 4h2v5h-2z" fill="#333"/>',
Measure:'<text x="12" y="11" font-size="10" font-weight="bold" text-anchor="middle" font-family="Liberation Sans" fill="#333">123</text><path d="M1 13h22v8H1z" fill="#f9b43c" stroke="#b5721a"/><path d="M5 13v4M9 13v3M13 13v4M17 13v3" stroke="#7a4a10"/>',
Clean:'<path d="m12 11 7-9 4 3-7 9z" fill="#cf3f62" stroke="#8a2a40"/><path d="m2 14 9-4 6 5-8 7z" fill="#f7e38d" stroke="#a98c35"/>',
Sun:'<circle cx="12" cy="12" r="5.500" fill="#ffd41f" stroke="#d8860b"/><path d="M12 1v4M12 19v4M1 12h4M19 12h4M4 4l3 3M17 17l3 3M20 4l-3 3M7 17l-3 3" stroke="#d8860b" stroke-width="1.500"/>',
Dim:'<path d="M15 1v4M23 9h-4M21 3l-3 3M8 3l3 3M21 15l-3-2" stroke="#d8860b" stroke-width="1.500"/><circle cx="15" cy="9" r="5" fill="#ffd41f"/><circle cx="9" cy="14" r="7.500" fill="#8da0c8" stroke="#5d6c8f"/>',
Shelf:'<path d="M2 2h5v20H2z" fill="#2c8348"/><path d="M8 2h3v20H8zM13 2h3v20h-3z" fill="#4c9c68"/><path d="M17 2h6v20h-6z" fill="#7e93cf"/><path d="M6 2v20M11.500 2v20M16.500 2v20" stroke="#fff"/><path d="M18 13h4v7h-4z" fill="#33416e"/>',
Wait:'<path d="M6 3h12v3l-4 6 4 6v4H6v-4l4-6-4-6z" fill="#2f9140" stroke="#1a5e2a"/>',
Select:'<path d="M7 2h15v9H7z" fill="#f2bf7c" stroke="#a5672f"/><path d="M11 12h11v10H11z" fill="#f2bf7c"/><circle cx="17" cy="17" r="5" fill="#f8d5c4" stroke="#dc4326" stroke-width="2"/><path d="m14 14 6 6" stroke="#dc4326" stroke-width="2"/><path d="m2 5 9 9-4 1-1 5-3-1z" fill="#fff" stroke="#555"/>',
G1:green('<path d="M6 6h6v6H6zM11 18q6 2 8-3" stroke-dasharray="2 1"/>'),G2:green('<path d="M6 6h6v6H6z" stroke-dasharray="2 1"/><path d="M12 13h6v6h-6z" fill="#eee"/>'),G3:green('<path d="M5 7h5l3 3h6M5 15h5l3 3M16 6l3 3M15 15h4" stroke-dasharray="3 1"/>'),G4:green('<circle cx="12" cy="12" r="5"/><path d="M5 5l4 2M19 5l-4 2M5 19l4-2M19 19l-4-2"/>'),
G5:green('<path d="M4 12 8 5l4 8 4-9 3 8" stroke="#b03326"/><path d="M5 17h7v3H5zM16 13v6m-3-2 3 3 3-3"/>'),G6:green('<path d="M12 5v14M6 8l12 8M18 8 6 16M8 5q4 4 8 0M8 19q4-4 8 0"/>'),G7:green('<path d="M6 7h12v11h-5v-5H6z" fill="#e8ece8" stroke="#3f6a45"/>'),
S1:blue('<path d="M4 21v-9h8V3h8v18z"/>'),S2:blue('<path d="M4 5h17v15H4z"/>'),S3:blue('<circle cx="12" cy="12" r="8.500"/>'),
S4:blue('<path d="M2 2h20v20H2z"/>')+'<path d="m9 5 8 9-4 .500 2 5-2 1-2-5-2.500 2z" fill="#fff" stroke="#555"/>',
S5:blue('<path d="M3 3h18v5H8v13H3z"/><path d="M11 11h10M11 11v10M15 14h6M15 14v7" fill="none" stroke-width="2"/>'),
S6:blue('<path d="M3 3h18v18H3z"/>')+'<path d="M8 14a5 5 0 1 1 6 3v-5H8" fill="#dde4f7" stroke="#5c6ea6"/>',
S7:blue('<path d="M3 3h18v18H3z"/>')+'<path d="M7 7h10v10H7z" fill="#eef1fa" stroke="#5c6ea6"/>',
S8:blue('<path d="M3 3h18v18H3z"/>')+'<circle cx="12" cy="12" r="5.500" fill="#eef1fa" stroke="#5c6ea6"/>',
S9:blue('<path d="M4 5h17v15l-8-1-9-8z" stroke="none"/>')+'<path d="M4 11v9h9" fill="none" stroke="#777" stroke-dasharray="1 1.500"/>',
S10:'<path d="M2 5h20v6H2z" fill="#bbb"/><path d="m7 2 5 3 5-3 2 2-4 4 4 4-2 2-5-3-5 3-2-2 4-4-4-4z" fill="#d5492f"/>'+blue('<path d="M2 16h20v5H2z"/>'),
Place:'<path d="M2 7h20v14H2z" fill="#3fae3a" stroke="#2a6d22"/><circle cx="12" cy="9" r="6" fill="#eac29b" stroke="#c05a3b" stroke-width="2"/><path d="M6 18h12" stroke="#e7d13d" stroke-width="2" stroke-dasharray="2 1"/>',
D1:'<path d="M4 2v20M20 2v20" stroke="#666" stroke-width="1.500" stroke-dasharray="5 1"/><path d="M4 12h12m-4-3 4 3-4 3" fill="none" stroke="#c33" stroke-width="1.500"/>',
D2:'<path d="M2 6v12M22 6v12" stroke="#666" stroke-width="1.500"/><path d="M3 12h18M7 9l-4 3 4 3M17 9l4 3-4 3" fill="none" stroke="#b44" stroke-width="1.300"/>',
R1:'<path d="M4 20h6q2-1 2-3V8l3-4h5" fill="none" stroke="#333" stroke-width="1.500"/><path d="M2 17h5v5H2zM18 2h5v5h-5z" fill="#f1e14e" stroke="#988b20"/>',
R2:'<path d="M3 2v18h19" fill="none" stroke="#6079b4" stroke-width="4"/><path d="M7 5h13v10" stroke="#888" fill="none" stroke-dasharray="2 1"/><path d="M8 10h9m-4-3v7" stroke="#c33"/>',
R3:'<path d="M2 12h3V3h5v15h4v-8h4v5h4" fill="none" stroke="#777" stroke-width="1.500"/><path d="M8 5v13M14 4v12" stroke="#c33" stroke-width="1.500"/>',
R4:'<path d="M3 4q10 8 0 18M21 4v18" fill="none" stroke="#333" stroke-width="1.300"/><path d="M9 14h8m-3-3 3 3-3 3" fill="none" stroke="#c33" stroke-width="1.500"/><path d="M1 1h5v5H1zM17 1h5v5h-5z" fill="#f1e14e" stroke="#988b20"/>',
R5:'<path d="M4 2h6l12 9v2l-12 9H4l8-10z" fill="#8298c8" stroke="#4c5f8e"/><path d="m5 6 8 6-8 6M13 12h8" fill="none" stroke="#c33"/>',
R6:'<path d="M2 5h14M2 10h14M2 15h14M2 20h14" stroke="#c25a4a" stroke-width="3.500"/><path d="M16 5h6M16 10h4M16 15h6M16 20h4" stroke="#c25a4a" stroke-width="1.500"/>',
R7:'<path d="M2 2h20v20H2z" fill="#dfe5f5" stroke="#5f74ab" stroke-width="2.500"/><path d="m7 7 10 10M17 7 7 17" stroke="#c33" stroke-width="2"/><path d="M6 6h4v4H6zM14 6h4v4h-4zM6 14h4v4H6zM14 14h4v4h-4z" fill="none" stroke="#c33"/>',
R8:'<path d="M2 14V8q0-4 4-4t4 4v8q0 3 3 3t3-3v-4q0-3 3-3t3 3v5M2 10h6v8q2 4 5 4" fill="none" stroke="#6f7d9c" stroke-width="2"/>',
Line:'<path d="m3 3 18 18" stroke="#5c6784" stroke-width="1.800"/>',Rect:blue('<path d="M3 5h18v15H3z"/>'),
Abc:'<text x="11" y="10" font-size="12" text-anchor="middle" font-family="Liberation Sans" fill="#555">abc</text><circle cx="17" cy="18" r="5" fill="#2fa045"/><path d="M17 15v6M14 18h6" stroke="#fff" stroke-width="1.500"/>',
AbcEdit:'<text x="11" y="10" font-size="12" text-anchor="middle" font-family="Liberation Sans" fill="#555">abc</text><path d="m9 22 2-5 9-9 3 3-9 9z" fill="#f6ad3c" stroke="#b5641c"/>',
P1:'<path d="M3 10h14v12H3z" fill="#2f9e3c" stroke="#1c6025"/><path d="M5 13h5v3H5zM12 16h3v4h-3zM5 18h4" fill="none" stroke="#a5e06f"/><path d="M13 3h8v9h-8z" fill="#ccc" stroke="#777"/><path d="M11 6q-4-4-7-1m0-3v4h4" fill="none" stroke="#c33" stroke-width="1.500"/>',
P2:'<path d="M5 5h14v14H5z" fill="#eee" stroke="#666"/><path d="M5 3h14M5 21h14M3 5v14M21 5v14" stroke="#777" stroke-width="1.500" stroke-dasharray="1 1.500"/><text x="12" y="15" font-size="8" font-weight="bold" text-anchor="middle" font-family="Liberation Sans" fill="#c22">U1</text>',
P3:'<path d="M1 7h4v10H1z" fill="#c44"/><path d="M7 7h4v4H7zM7 13h4v4H7z" fill="#eed44a" stroke="#8a7a20"/><path d="M13 7h6l4 3v4l-4 3h-6z" fill="#999" stroke="#444"/>',
Nodes:'<path d="M3 21 7 5l9 14 4-15" fill="none" stroke="#5f6d90" stroke-width="1.500"/><g fill="#8ba0cf" stroke="#5f6d90"><circle cx="4" cy="20" r="2"/><circle cx="7" cy="5" r="2"/><circle cx="16" cy="19" r="2"/><circle cx="20" cy="4" r="2"/></g>',
W1:blue('<path d="M9 2h14v14H9z"/><path d="M5 6h13v14H5z" fill="#c3d0ef"/>')+'<path d="M2 10h8v12H2z" fill="#eac860" stroke="#94752a"/><path d="M2 13h8M2 16h8M2 19h8" stroke="#94752a"/>',
W2:blue('<path d="m2 3 9 6 9-6v13l-9-6-9 6z"/>')+'<path d="M9 16h14v5H9z" fill="#eee" stroke="#666"/><path d="M11 18h8v2h-8z" fill="#39a047"/>',
W3:'<path d="M2 3h20v18H2z" fill="#f4f6fa" stroke="#777" stroke-width="1.500"/><path d="M2 5h20" stroke="#777" stroke-width="3"/>'+blue('<path d="m7 9 5 4 5-4v8l-5-4-5 4z"/>'),
Help:'<circle cx="12" cy="11" r="9" fill="#a6b9e6" stroke="#5f6fa0"/><path d="m11 19 4 5 2-6z" fill="#a6b9e6"/><path d="M8.500 9q0-4 3.500-4t3.500 3-3 4v3M12.500 16v2" fill="none" stroke="#27376e" stroke-width="2"/>'
};
const rows={
row1:[['n3','New Open Save'],['n9','Move Copy Delete Undo Down Redo Step Fix Pin'],['n11','Grid1 Grid2 ZoomPts ZoomBox ZoomIn ZoomOut ZoomPrev ZoomFit Refresh View3D Flip'],['n7w','Grids Color Shadow Layers CM DFA Web'],['n9w','Info Report Measure Clean Sun Dim Shelf Wait Select']],
row2:[['n7','G1 G2 G3 G4 G5 G6 G7'],['n10','S1 S2 S3 S4 S5 S6 S7 S8 S9 S10'],['n3','Place D1 D2'],['n8','R1 R2 R3 R4 R5 R6 R7 R8'],['n4','Line Rect Abc AbcEdit'],['n3','P1 P2 P3'],['n1','Nodes'],['n4','W1 W2 W3 Help']]};
for(const id in rows)document.getElementById(id).innerHTML=rows[id].map(([c,names])=>`<div class="tool-group d-flex align-items-center ${c}" role="toolbar"><span class="grip"></span>${names.split(' ').map(n=>`<button class="tool-btn${n=='Down'||n=='Step'?' slim':''}" aria-label="${n}"><svg viewBox="0 0 24 24">${art[n]}</svg></button>`).join('')}</div>`).join('');
// Layer visibility rows
const cb=(l,on)=>`<td><input type="checkbox" class="form-check-input cb" aria-label="${l}"${on?' checked':''}></td>`;
const sw=(l,c='')=>`<td><button class="swatch ${c}" aria-label="${l}"></button></td>`;
document.getElementById('visTop').insertAdjacentHTML('beforeend',
 `<tr><th>Conductors</th><td></td>${['Plan','Etch','Via','Pin','Drc','All'].map(l=>cb('Conductors '+l)).join('')}</tr>`+
 `<tr><th>Planes</th>${cb('Planes Plan',1)}<td></td>${['Etch','Via','Pin','Drc','All'].map(l=>cb('Planes '+l,1)).join('')}</tr>`);
document.getElementById('visLayers').insertAdjacentHTML('beforeend',
 `<tr><th>Top</th><td></td>${sw('Plan')}${sw('Etch','sw-red')}${sw('Via','sw-blue')}${sw('Pin','sw-red')}${sw('Drc','sw-yel')}${cb('Top all')}</tr>`+
 `<tr><th>Bottom</th><td></td>${sw('Plan')}${sw('Etch')}${sw('Via')}${sw('Pin')}${sw('Drc')}${cb('Bottom all')}</tr>`+
 `<tr><th>All</th><td></td>${sw('Plan')}<td></td><td></td><td></td>${sw('Drc')}${cb('All layers')}</tr>`);
</script>
</body>
</html>
